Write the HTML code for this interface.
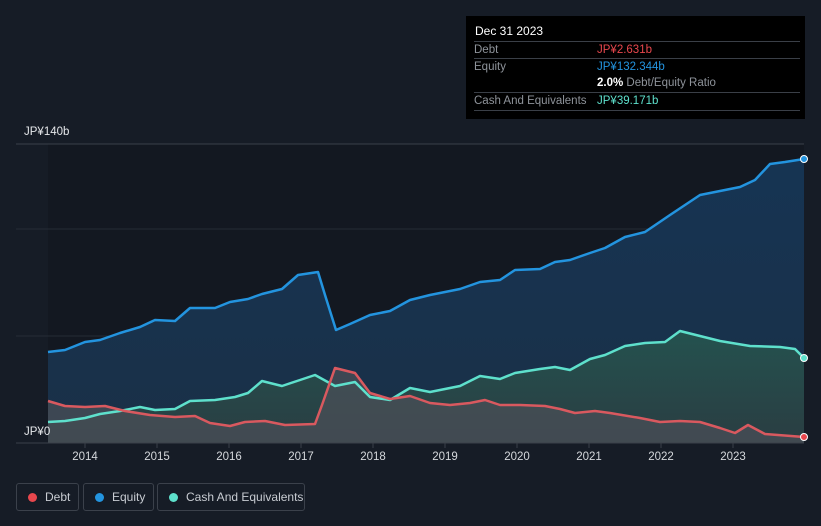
<!DOCTYPE html>
<html><head><meta charset="utf-8"><style>
body{margin:0;width:821px;height:526px;background:#161c26;font-family:"Liberation Sans",sans-serif;overflow:hidden;position:relative}
.tt{position:absolute;left:466px;top:16px;width:339px;height:103px;background:#000;}
.tt .h{position:absolute;left:9px;top:8px;color:#fff;font-size:12px}
.row{position:absolute;left:8px;width:326px;border-top:1px solid #3a3f47;font-size:11.5px;color:#8e939a;height:17px;line-height:17px}
.row span{position:absolute;left:123px;font-weight:bold}
.lg{position:absolute;top:483px;height:26px;border:1px solid #3b414b;border-radius:3px;color:#c8ccd2;font-size:12px;line-height:26px}
.lg i{position:absolute;left:11px;top:9px;width:9px;height:9px;border-radius:50%}
.lg b{font-weight:normal;position:absolute;left:28px}
</style></head><body>
<svg width="821" height="526" style="position:absolute;left:0;top:0" stroke-linejoin="round">
<defs>
<linearGradient id="ge" x1="0" y1="0" x2="0" y2="1"><stop offset="0" stop-color="#163453"/><stop offset="1" stop-color="#1a3047"/></linearGradient>
<linearGradient id="gc" x1="0" y1="0" x2="0" y2="1"><stop offset="0" stop-color="#24524f"/><stop offset="1" stop-color="#2a3d42"/></linearGradient>
</defs>
<rect x="48" y="144" width="756" height="299" fill="#131821"/>
<line x1="16" y1="144" x2="804" y2="144" stroke="#3a4049"/>
<line x1="16" y1="229" x2="804" y2="229" stroke="#262c35"/>
<line x1="16" y1="336" x2="804" y2="336" stroke="#262c35"/>
<polygon fill="url(#ge)" points="48,352 65,350 85,342 100,340 120,333 140,327 155,320 175,321 190,308 215,308 230,302 248,299 262,294 282,289 298,275 318,272 325,295 336,330 350,324 370,315 390,311 410,300 430,295 460,289 480,282 500,280 515,270 540,269 555,262 570,260 590,253 605,248 625,237 645,232 670,215 685,205 700,195 720,191 740,187 755,180 770,164 785,162 804,159 804,443 48,443"/>
<polygon fill="url(#gc)" points="48,422 65,421 85,418 100,414 120,411 140,407 155,410 175,409 190,401 215,400 235,397 248,393 262,381 282,386 300,380 315,375 335,386 355,382 370,397 390,400 410,388 430,392 460,386 480,376 500,379 515,373 540,369 555,367 570,370 590,359 605,355 625,346 645,343 665,342 680,331 700,336 720,341 750,346 780,347 795,349 804,358 804,443 48,443"/>
<polygon fill="#4a4f57" opacity="0.75" points="48,401 65,406 85,407 105,406 125,411 150,415 175,417 195,416 210,423 230,426 245,422 265,421 285,425 315,424 322,405 335,368 355,373 370,393 390,399 410,396 430,403 450,405 470,403 485,400 500,405 520,405 545,406 560,409 575,413 595,411 610,413 640,418 660,422 680,421 700,422 720,428 735,433 748,425 765,434 804,437 804,443 48,443"/>
<polyline fill="none" stroke="#2394df" stroke-width="2.5" points="48,352 65,350 85,342 100,340 120,333 140,327 155,320 175,321 190,308 215,308 230,302 248,299 262,294 282,289 298,275 318,272 325,295 336,330 350,324 370,315 390,311 410,300 430,295 460,289 480,282 500,280 515,270 540,269 555,262 570,260 590,253 605,248 625,237 645,232 670,215 685,205 700,195 720,191 740,187 755,180 770,164 785,162 804,159"/>
<polyline fill="none" stroke="#5ee0cc" stroke-width="2.5" points="48,422 65,421 85,418 100,414 120,411 140,407 155,410 175,409 190,401 215,400 235,397 248,393 262,381 282,386 300,380 315,375 335,386 355,382 370,397 390,400 410,388 430,392 460,386 480,376 500,379 515,373 540,369 555,367 570,370 590,359 605,355 625,346 645,343 665,342 680,331 700,336 720,341 750,346 780,347 795,349 804,358"/>
<polyline fill="none" stroke="#d9595f" stroke-width="2.5" points="48,401 65,406 85,407 105,406 125,411 150,415 175,417 195,416 210,423 230,426 245,422 265,421 285,425 315,424 322,405 335,368 355,373 370,393 390,399 410,396 430,403 450,405 470,403 485,400 500,405 520,405 545,406 560,409 575,413 595,411 610,413 640,418 660,422 680,421 700,422 720,428 735,433 748,425 765,434 804,437"/>
<circle cx="804" cy="159" r="3.5" fill="#2394df" stroke="#fff" stroke-width="1"/>
<circle cx="804" cy="358" r="3.5" fill="#5ee0cc" stroke="#fff" stroke-width="1"/>
<circle cx="804" cy="437" r="3.5" fill="#e8474d" stroke="#fff" stroke-width="1"/>
<rect x="16" y="423" width="32" height="20" fill="#161c26"/>
<line x1="16" y1="443" x2="804" y2="443" stroke="#3a4049"/>
<g stroke="#3a4049"><line x1="85" y1="443" x2="85" y2="448"/><line x1="157" y1="443" x2="157" y2="448"/><line x1="229" y1="443" x2="229" y2="448"/><line x1="301" y1="443" x2="301" y2="448"/><line x1="373" y1="443" x2="373" y2="448"/><line x1="445" y1="443" x2="445" y2="448"/><line x1="517" y1="443" x2="517" y2="448"/><line x1="589" y1="443" x2="589" y2="448"/><line x1="661" y1="443" x2="661" y2="448"/><line x1="733" y1="443" x2="733" y2="448"/></g>
<g fill="#d5d8dc" font-size="11.5" text-anchor="middle" font-family="Liberation Sans,sans-serif">
<text x="85" y="460">2014</text><text x="157" y="460">2015</text><text x="229" y="460">2016</text><text x="301" y="460">2017</text><text x="373" y="460">2018</text><text x="445" y="460">2019</text><text x="517" y="460">2020</text><text x="589" y="460">2021</text><text x="661" y="460">2022</text><text x="733" y="460">2023</text>
</g>
<text x="24" y="135" fill="#e5e7ea" font-size="11.5" font-family="Liberation Sans,sans-serif">JP¥140b</text>
<text x="24" y="435" fill="#e5e7ea" font-size="11.5" font-family="Liberation Sans,sans-serif">JP¥0</text>
</svg>
<div class="tt">
<div class="h">Dec 31 2023</div>
<div class="row" style="top:25px">Debt<span style="color:#e8474d;font-weight:normal">JP¥2.631b</span></div>
<div class="row" style="top:42px">Equity<span style="color:#2394df;font-weight:normal">JP¥132.344b</span></div>
<div class="row" style="top:59px;border-top:none"><span style="color:#fff">2.0%<em style="font-style:normal;font-weight:normal;color:#8e939a"> Debt/Equity Ratio</em></span></div>
<div class="row" style="top:76px;border-bottom:1px solid #3a3f47">Cash And Equivalents<span style="color:#5ee0cc;font-weight:normal">JP¥39.171b</span></div>
</div>
<div class="lg" style="left:16px;width:61px"><i style="background:#e8474d"></i><b>Debt</b></div>
<div class="lg" style="left:83px;width:69px"><i style="background:#2394df"></i><b>Equity</b></div>
<div class="lg" style="left:157px;width:146px"><i style="background:#5ee0cc"></i><b>Cash And Equivalents</b></div>
</body></html>
